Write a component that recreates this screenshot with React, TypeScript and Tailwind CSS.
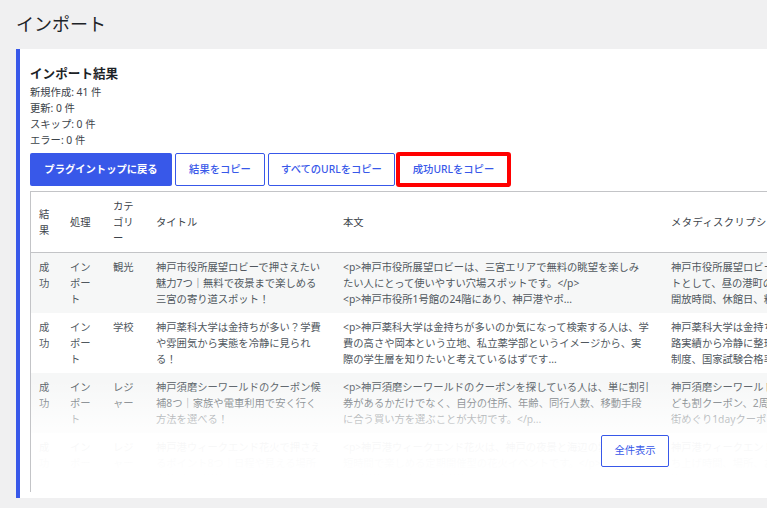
import React from "react";

type Row = {
  result: string[];
  action: string[];
  cat: string[];
  title: string[];
  body: string[];
  meta: string[];
};

const rows: Row[] = [
  {
    result: ["成", "功"],
    action: ["イン", "ポー", "ト"],
    cat: ["観光"],
    title: ["神戸市役所展望ロビーで押さえたい", "魅力7つ｜無料で夜景まで楽しめる", "三宮の寄り道スポット！"],
    body: [
      "<p>神戸市役所展望ロビーは、三宮エリアで無料の眺望を楽しみ",
      "たい人にとって使いやすい穴場スポットです。</p>",
      "<p>神戸市役所1号館の24階にあり、神戸港やポ...",
    ],
    meta: ["神戸市役所展望ロビーは三宮駅から歩いて行ける無料スポッ", "トとして、昼の港町の景色と夜景の両方を楽しめます。", "開放時間、休館日、料金、アクセスをまとめて..."],
  },
  {
    result: ["成", "功"],
    action: ["イン", "ポー", "ト"],
    cat: ["学校"],
    title: ["神戸薬科大学は金持ちが多い？学費", "や雰囲気から実態を冷静に見られ", "る！"],
    body: [
      "<p>神戸薬科大学は金持ちが多いのか気になって検索する人は、学",
      "費の高さや岡本という立地、私立薬学部というイメージから、実",
      "際の学生層を知りたいと考えているはずです...",
    ],
    meta: ["神戸薬科大学は金持ちが多いのかを、学費や立地、卒業後の進", "路実績から冷静に整理します。奨学金や特待生", "制度、国家試験合格率もあわせて..."],
  },
  {
    result: ["成", "功"],
    action: ["イン", "ポー", "ト"],
    cat: ["レジ", "ャー"],
    title: ["神戸須磨シーワールドのクーポン候", "補8つ｜家族や電車利用で安く行く", "方法を選べる！"],
    body: [
      "<p>神戸須磨シーワールドのクーポンを探している人は、単に割引",
      "券があるかだけでなく、自分の住所、年齢、同行人数、移動手段",
      "に合う買い方を選ぶことが大切です。</p...",
    ],
    meta: ["神戸須磨シーワールドの前売り券、年間パスポート、子", "ども割クーポン、2周年記念チケットなどを比較", "街めぐり1dayクーポンの使い方..."],
  },
  {
    result: ["成", "功"],
    action: ["イン", "ポー", "ト"],
    cat: ["レジ", "ャー"],
    title: ["神戸港ウィークエンド花火で押さえ", "るポイント8つ｜日程や見える場所", "を事前に確認して楽しむ！"],
    body: [
      "<p>神戸港ウィークエンド花火は、神戸の夜景と海辺の雰囲気を",
      "短時間で楽しめる定期開催型の花火イベントです。</p>",
      "<p>開催日や打ち上げ場所を知っておくと...",
    ],
    meta: ["神戸港ウィークエンド花火の開催日程、打", "ち上げ時間、場所、おすすめの観覧スポット", "混雑を避けるコツをまとめて..."],
  },
];

function Lines({ lines }: { lines: string[] }) {
  return (
    <>
      {lines.map((l, i) => (
        <div key={i} className="whitespace-nowrap">
          {l}
        </div>
      ))}
    </>
  );
}

export default function App() {
  return (
    <div
      className="min-h-screen w-full overflow-hidden bg-[#f0f0f1]"
      style={{ fontFamily: '"Noto Sans", "Noto Sans CJK JP", sans-serif' }}
    >
      <h1 className="pl-4 pt-[12px] pb-[13px] text-[18px] leading-[24px] text-[#1d2327]">インポート</h1>

      <div className="ml-4 w-[1300px] border-l-4 border-[#3858e9] bg-white pl-[10px] pt-[16px] pb-[6px]">
        <h3 className="text-[12.6px] font-bold leading-[18px] text-[#1d2327]">インポート結果</h3>
        <div className="mt-[1px] text-[10.3px] leading-4 text-[#3c434a]">
          <div>新規作成: 41 件</div>
          <div>更新: 0 件</div>
          <div>スキップ: 0 件</div>
          <div>エラー: 0 件</div>
        </div>

        <div className="mt-[4px] flex h-[35px] items-center text-[10.3px]">
          <button className="h-[33px] w-[142px] rounded-[2px] bg-[#3858e9] font-semibold text-white">
            プラグイントップに戻る
          </button>
          <button className="ml-[3px] h-[33px] w-[90px] rounded-[2px] border border-[#3858e9] bg-white font-medium text-[#3858e9]">
            結果をコピー
          </button>
          <button className="ml-[3px] h-[33px] w-[127px] rounded-[2px] border border-[#3858e9] bg-white font-medium text-[#3858e9]">
            すべてのURLをコピー
          </button>
          <button className="ml-[1px] h-[35px] w-[115px] rounded-[3px] border-4 border-[#ff0000] bg-white font-medium text-[#3858e9]">
            成功URLをコピー
          </button>
        </div>

        <div className="relative mt-[4px] h-[301px] w-[1250px] overflow-hidden border-l border-t border-[#c3c4c7]">
          <table className="w-[1250px] table-fixed border-collapse text-left text-[10.3px] leading-4">
            <colgroup>
              <col className="w-[31px]" />
              <col className="w-[43px]" />
              <col className="w-[43px]" />
              <col className="w-[187px]" />
              <col className="w-[328px]" />
              <col />
            </colgroup>
            <thead>
              <tr className="border-b border-[#c3c4c7] text-[#3c434a]">
                <th className="px-2 py-[6px] align-middle font-normal">
                  <Lines lines={["結", "果"]} />
                </th>
                <th className="px-2 py-[6px] align-middle font-normal">処理</th>
                <th className="px-2 py-[6px] align-middle font-normal">
                  <Lines lines={["カテ", "ゴリ", "ー"]} />
                </th>
                <th className="px-2 py-[6px] align-middle font-normal">タイトル</th>
                <th className="px-2 py-[6px] align-middle font-normal">本文</th>
                <th className="px-2 py-[6px] align-middle font-normal whitespace-nowrap tracking-[0.04em]">メタディスクリプション</th>
              </tr>
            </thead>
            <tbody className="text-[#50575e]">
              {rows.map((r, i) => (
                <tr key={i} className={i % 2 === 0 ? "bg-[#f6f7f7]" : "bg-white"}>
                  <td className="px-2 py-[6px] align-top">
                    <Lines lines={r.result} />
                  </td>
                  <td className="px-2 py-[6px] align-top">
                    <Lines lines={r.action} />
                  </td>
                  <td className="px-2 py-[6px] align-top">
                    <Lines lines={r.cat} />
                  </td>
                  <td className="px-2 py-[6px] align-top">
                    <Lines lines={r.title} />
                  </td>
                  <td className="px-2 py-[6px] align-top">
                    <Lines lines={r.body} />
                  </td>
                  <td className="px-2 py-[6px] align-top">
                    <Lines lines={r.meta} />
                  </td>
                </tr>
              ))}
            </tbody>
          </table>

          {/* fade out the rest of the rows */}
          <div className="pointer-events-none absolute inset-x-0 bottom-0 h-[112px] bg-[linear-gradient(to_bottom,rgba(255,255,255,0)_0%,rgba(255,255,255,0.6)_33%,rgba(255,255,255,0.95)_55%,#fff_85%)]" />

          <button className="absolute left-[570px] top-[243px] h-[32px] w-[68px] rounded-[2px] border border-[#3858e9] bg-white text-[10.3px] text-[#3858e9]">
            全件表示
          </button>
        </div>
      </div>
    </div>
  );
}
